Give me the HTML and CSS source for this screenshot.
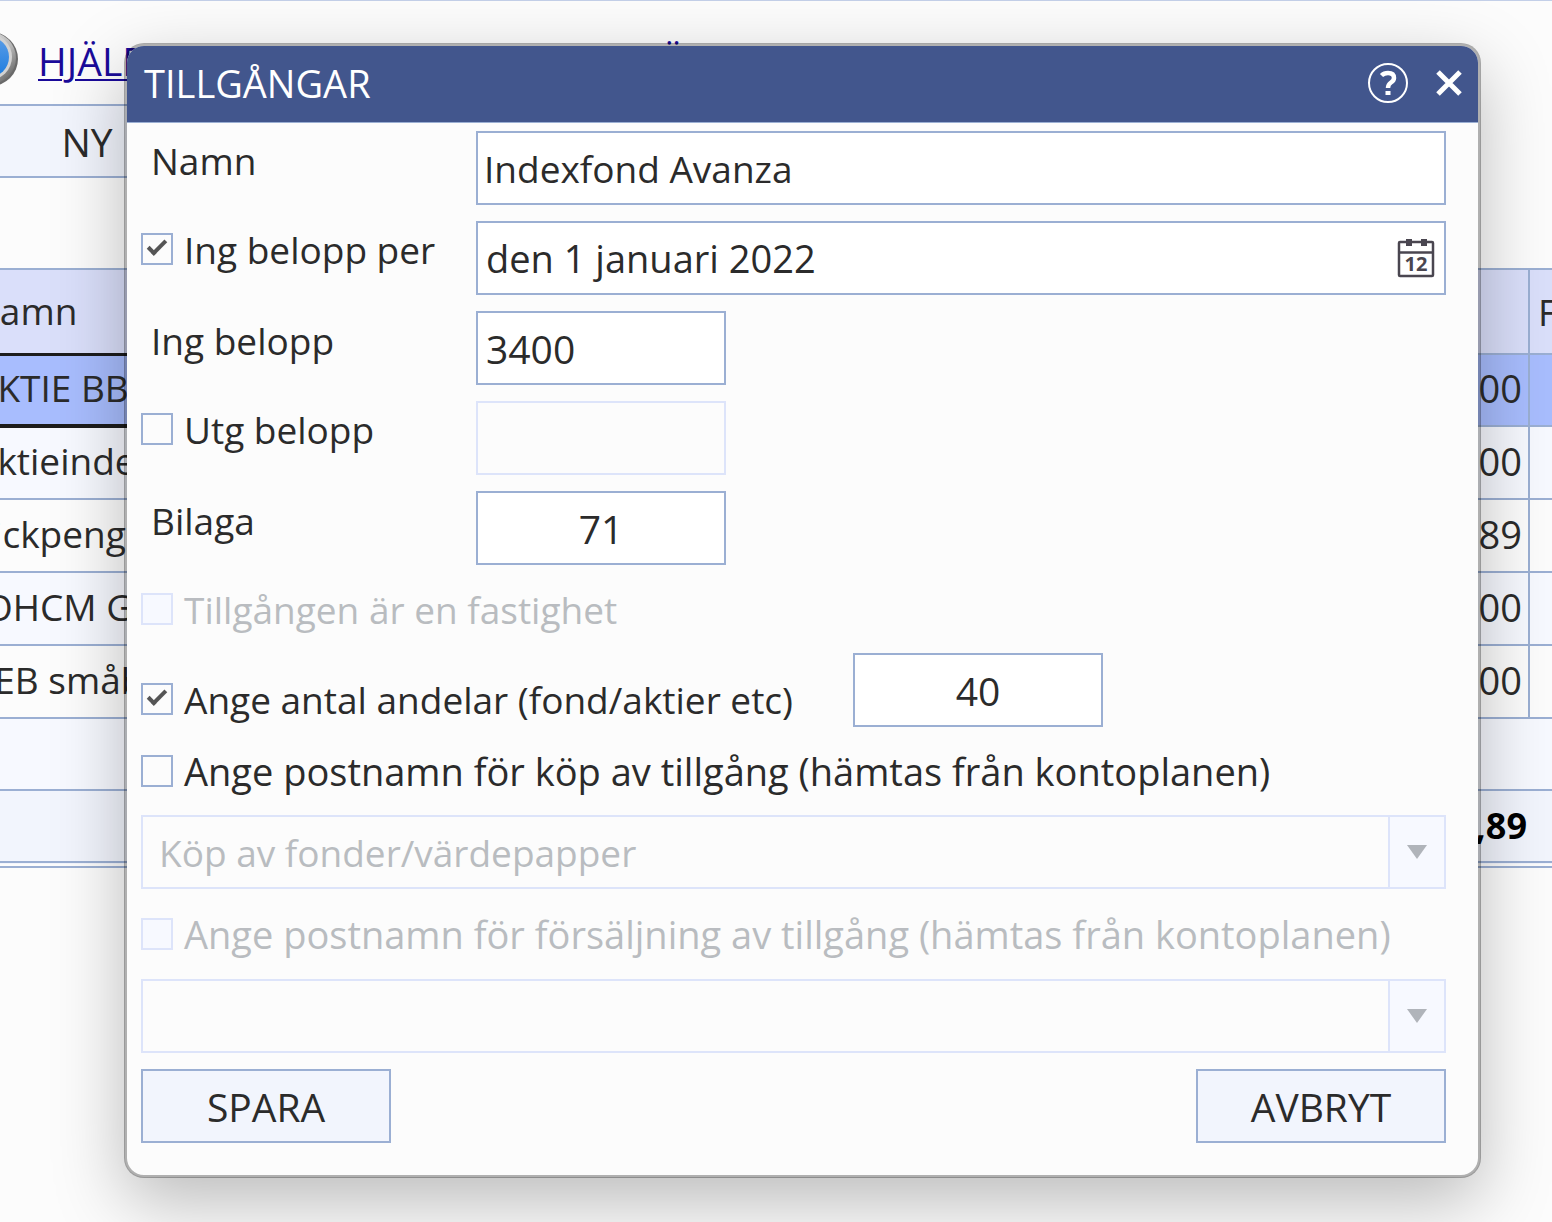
FILE: index.html
```html
<!DOCTYPE html>
<html lang="sv">
<head>
    <meta charset="utf-8">
    <title>Tillgångar</title>
    <link rel="stylesheet" href="styles.css">
</head>
<body>

    <div class="page">
        <header class="help-bar">
            <svg class="help-logo" width="56" height="60" viewBox="0 0 56 60" aria-hidden="true">
                <defs>
                    <linearGradient id="ring" x1="0" y1="0" x2="1" y2="1">
                        <stop offset="0" stop-color="#f4f4f4"/>
                        <stop offset="0.6" stop-color="#b5b5b5"/>
                        <stop offset="1" stop-color="#4c4c4c"/>
                    </linearGradient>
                    <linearGradient id="ball" x1="0" y1="0" x2="0" y2="1">
                        <stop offset="0" stop-color="#5b9de6"/>
                        <stop offset="1" stop-color="#1c7ce0"/>
                    </linearGradient>
                </defs>
                <circle cx="27" cy="30" r="27" fill="#6a6a6a"/>
                <circle cx="26" cy="29" r="26" fill="url(#ring)"/>
                <circle cx="25" cy="28" r="23" fill="#d2d2d2"/>
                <circle cx="25" cy="28" r="20" fill="url(#ball)"/>
            </svg>
            <a href="#help">HJÄLP</a>
            <a href="#open" class="link-open">Ö</a>
        </header>

        <div class="toolbar">
            <button type="button">NY</button>
        </div>

        <table class="assets">
            <thead>
                <tr><th>Namn</th><th></th><th class="extra">F</th></tr>
            </thead>
            <tbody>
                <tr class="selected"><td>AKTIE BB</td><td class="amount">00</td><td></td></tr>
                <tr><td>Aktieindex</td><td class="amount">00</td><td></td></tr>
                <tr><td>Fickpeng</td><td class="amount">89</td><td></td></tr>
                <tr><td>JOHCM G</td><td class="amount">00</td><td></td></tr>
                <tr><td>SEB småb</td><td class="amount">00</td><td></td></tr>
            </tbody>
            <tfoot>
                <tr><td colspan="3"></td></tr>
                <tr class="total"><td></td><td class="amount">,89</td><td></td></tr>
            </tfoot>
        </table>
    </div>

    <div class="overlay">
        <form class="dialog" role="dialog" aria-labelledby="dialog-title">
            <div class="dialog-head">
                <h1 id="dialog-title">TILLGÅNGAR</h1>
                <button type="button" class="head-btn" aria-label="Hjälp">
                    <svg width="42" height="42" viewBox="0 0 42 42" fill="none" stroke="#fff">
                        <circle cx="21" cy="21" r="19" stroke-width="2"/>
                        <path d="M14.500 13.500Q17 11 21 11Q27 11 27 16Q27 18.500 24 20.500Q21 22.500 21 26" stroke-width="4.500"/>
                        <path d="M18.500 29H23.500V33H18.500Z" fill="#fff" stroke="none"/>
                    </svg>
                </button>
                <button type="button" class="head-btn" aria-label="Stäng">
                    <svg width="28" height="28" viewBox="0 0 28 28" fill="none" stroke="#fff" stroke-width="5">
                        <path d="M3 3L25 25M25 3L3 25"/>
                    </svg>
                </button>
            </div>

            <div class="dialog-body">
                <div class="row">
                    <label class="caption" for="name">Namn</label>
                    <input class="field" type="text" id="name" value="Indexfond Avanza">
                </div>
                <div class="row">
                    <label class="check"><input type="checkbox" checked>Ing belopp per</label>
                    <div class="field date">
                        <input type="text" aria-label="Datum" value="den 1 januari 2022">
                        <button type="button" aria-label="Välj datum">
                            <svg width="38" height="40" viewBox="0 0 38 40">
                                <rect x="2" y="4" width="34" height="34" rx="1" fill="none" stroke="#4a4650" stroke-width="2.500"/>
                                <path d="M2 14.500H36" stroke="#4a4650" stroke-width="2.500"/>
                                <path d="M9 1H15V8H9ZM24 1H30V8H24Z" fill="#4a4650"/>
                                <text x="19" y="33" text-anchor="middle">12</text>
                            </svg>
                        </button>
                    </div>
                </div>
                <div class="row">
                    <label class="caption" for="opening">Ing belopp</label>
                    <input class="field short" type="text" id="opening" value="3400">
                </div>
                <div class="row">
                    <label class="check"><input type="checkbox">Utg belopp</label>
                    <input class="field short" type="text" aria-label="Utgående belopp" disabled>
                </div>
                <div class="row">
                    <label class="caption" for="appendix">Bilaga</label>
                    <input class="field short center" type="text" id="appendix" value="71">
                </div>

                <label class="check disabled"><input type="checkbox" disabled>Tillgången är en fastighet</label>

                <div class="row shares">
                    <label class="check"><input type="checkbox" checked>Ange antal andelar (fond/aktier etc)</label>
                    <input class="field short center" type="text" aria-label="Antal andelar" value="40">
                </div>

                <label class="check post"><input type="checkbox">Ange postnamn för köp av tillgång (hämtas från kontoplanen)</label>
                <div class="combo">
                    <select aria-label="Postnamn för köp" disabled>
                        <option>Köp av fonder/värdepapper</option>
                    </select>
                    <span class="arrow"></span>
                </div>

                <label class="check post disabled"><input type="checkbox" disabled>Ange postnamn för försäljning av tillgång (hämtas från kontoplanen)</label>
                <div class="combo">
                    <select aria-label="Postnamn för försäljning" disabled>
                        <option></option>
                    </select>
                    <span class="arrow"></span>
                </div>

                <div class="actions">
                    <button type="submit">SPARA</button>
                    <button type="button">AVBRYT</button>
                </div>
            </div>
        </form>
    </div>

</body>
</html>
```
FILE: styles.css
```css
* {
    box-sizing: border-box;
}

body {
    margin: 0;
    min-height: 100vh;
    overflow: hidden;
    background-color: #fcfcfc;
    border-top: 1px solid #c3cfe8;
    color: #2b2b2b;
    font-family: "Open Sans", "Noto Sans", sans-serif;
    font-size: 37px;
}

input, select, button {
    font: inherit;
    color: inherit;
}

button {
    cursor: pointer;
}

/* page behind the dialog, scrolled a little to the right */
.page {
    margin: 0 -36px;
}

.help-bar {
    display: flex;
    align-items: center;
    height: 103px;
    padding-top: 12px;
}

.help-logo {
    margin-right: 18px;
}

.help-bar a {
    padding-top: 4px;
    color: #1a0a9a;
    font-size: 39px;
    text-decoration-thickness: 2px;
    text-underline-offset: 3px;
}

.help-bar .link-open {
    margin-left: 512px;
}

.toolbar button {
    width: 246px;
    height: 74px;
    padding: 0;
    background-color: #f2f5fd;
    border: 2px solid #9bafd3;
    font-size: 39px;
}

.assets {
    width: 100%;
    margin-top: 90px;
    border-collapse: collapse;
    table-layout: fixed;
    white-space: nowrap;
}

.assets th,
.assets td {
    height: 73px;
    padding: 0 6px 4px 8px;
    border: 2px solid #9bafd3;
    text-align: left;
    font-weight: normal;
    line-height: 52px;
}

.assets th {
    height: 85px;
    padding-left: 6px;
    padding-bottom: 0;
    background-color: #dadffa;
}

.assets .extra {
    width: 58px;
    padding: 0 8px;
}

.assets .amount {
    text-align: right;
    font-size: 38px;
}

.assets tbody tr:nth-child(even) {
    background-color: #f7f9ff;
}

.assets tbody .selected {
    background-color: #a8bdfe;
}

.assets .selected td {
    height: 72px;
}

.assets .selected td:first-child {
    border-top: 3px solid #1c1c1c;
    border-bottom: 4px solid #1c1c1c;
}

.assets tfoot td {
    height: 72px;
    background-color: #f7f9ff;
}

.assets .total td {
    height: 74px;
    padding-right: 2px;
    padding-bottom: 0;
    border-width: 2px 0 7px;
    border-bottom-style: double;
    background-color: #f2f5fd;
    color: #000;
    font-size: 36px;
    font-weight: bold;
}

.overlay {
    position: absolute;
    inset: 0;
    padding: 43px 71px 44px 124px;
}

.dialog {
    overflow: hidden;
    background-color: #fcfcfc;
    background-clip: padding-box;
    border: 3px solid rgba(0, 0, 0, 0.3);
    border-radius: 20px;
    box-shadow: 0 24px 70px rgba(0, 0, 0, 0.26);
}

.dialog-head {
    display: flex;
    align-items: center;
    gap: 26px;
    height: 77px;
    padding: 0 15px 2px 17px;
    background-color: #42568d;
    border-bottom: 1px solid #9bafd3;
    color: #fff;
}

.dialog-head h1 {
    flex: 1;
    margin: 0;
    font-size: 38px;
    font-weight: normal;
}

.head-btn {
    display: flex;
    padding: 0;
    background: none;
    border: 0;
}

.dialog-body {
    display: flex;
    flex-direction: column;
    gap: 16px;
    padding: 8px 32px 32px 14px;
}

.row {
    display: grid;
    grid-template-columns: 335px 1fr;
    align-items: start;
}

.shares {
    grid-template-columns: 712px 1fr;
    align-items: end;
}

.caption {
    padding-left: 10px;
    line-height: 60px;
}

.check {
    display: flex;
    align-items: center;
    gap: 11px;
    height: 56px;
    white-space: nowrap;
}

.check input {
    flex: none;
    appearance: none;
    width: 32px;
    height: 32px;
    margin: 0;
    border: 2px solid #9bafd3;
}

/* the tick is an L-shape turned by 45 degrees */
.check input:checked::before {
    content: "";
    display: block;
    width: 6px;
    height: 15px;
    margin: 1px 0 0 9px;
    border: solid #555;
    border-width: 0 4px 4px 0;
    transform: rotate(45deg);
}

.check input:disabled {
    background-color: #f7f9ff;
    border-color: #dde4fa;
}

.post {
    font-size: 38px;
}

.combo + .check {
    height: 58px;
}

.disabled {
    color: #b9bcc0;
}

.field {
    width: 100%;
    height: 74px;
    padding: 0 6px;
    background-color: #fff;
    border: 2px solid #9bafd3;
}

.field:disabled {
    background-color: #fcfcfc;
    border-color: #dde4fa;
}

.short {
    width: 250px;
    padding: 0 8px;
    font-size: 39px;
}

.center {
    text-align: center;
}

.date {
    display: flex;
    align-items: center;
    padding: 0 9px 0 8px;
    font-size: 38px;
}

.date input {
    flex: 1;
    min-width: 0;
    padding: 0;
    background: none;
    border: 0;
}

.date button {
    display: flex;
    padding: 0;
    background: none;
    border: 0;
}

.date text {
    font-size: 20px;
    font-weight: bold;
    fill: #4a4650;
}

.combo {
    display: flex;
    height: 74px;
    border: 2px solid #dde4fa;
}

.combo select {
    flex: 1;
    appearance: none;
    padding: 0 16px;
    background: none;
    border: 0;
    color: #b9bcc0;
    opacity: 1;
}

.arrow {
    display: flex;
    align-items: center;
    justify-content: center;
    width: 56px;
    background-color: #f7f9ff;
    border-left: 2px solid #dde4fa;
}

.arrow::before {
    content: "";
    border: solid transparent;
    border-width: 14px 10px 0;
    border-top-color: #b0b4ba;
}

.actions {
    display: flex;
    justify-content: space-between;
}

.actions button {
    width: 250px;
    height: 74px;
    padding: 0;
    background-color: #f2f5fd;
    border: 2px solid #9bafd3;
    font-size: 39px;
}
```
